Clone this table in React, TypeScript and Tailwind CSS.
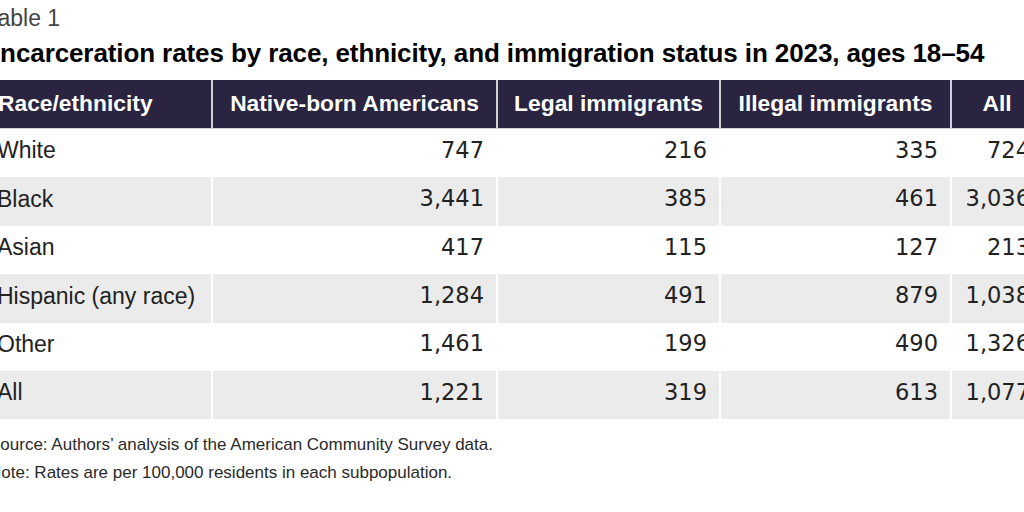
const headers = ['Race/ethnicity', 'Native-born Americans', 'Legal immigrants', 'Illegal immigrants', 'All'];

const rows: string[][] = [
  ['White', '747', '216', '335', '724'],
  ['Black', '3,441', '385', '461', '3,036'],
  ['Asian', '417', '115', '127', '213'],
  ['Hispanic (any race)', '1,284', '491', '879', '1,038'],
  ['Other', '1,461', '199', '490', '1,326'],
  ['All', '1,221', '319', '613', '1,077'],
];

const cols = 'grid grid-cols-[221px_283px_221px_229px_90px] gap-x-[2px]';

export default function App() {
  return (
    <div className="w-[1024px] h-[512px] overflow-hidden bg-white font-['Liberation_Sans',Arial,sans-serif]">
      <div className="w-[1052px] -ml-[10px]">
        {/* label + title */}
        <div className="pt-[5px] h-[34px] text-[23px] leading-[26px] text-[#444] -ml-[4px]">Table 1</div>
        <h1 className="mt-[4px] h-[36px] text-[26px] leading-[30px] font-bold text-black ml-[3px] tracking-[-0.1px]">
          Incarceration rates by race, ethnicity, and immigration status in 2023, ages 18–54
        </h1>

        {/* table */}
        <div className="mt-[6px]">
          <div className={`${cols} bg-[#cfcfd8] pb-[1px]`}>
            {headers.map((h, i) => (
              <div
                key={h}
                className={`h-[48px] bg-[#2a2440] text-white font-bold text-[22.8px] flex items-center pb-[2px] ${
                  i === 0 ? 'pl-[8px]' : 'justify-center'
                }`}
              >
                {h}
              </div>
            ))}
          </div>
          {rows.map((r, ri) => (
            <div key={r[0] + ri} className={cols}>
              {r.map((c, ci) => (
                <div
                  key={ci}
                  className={`h-[48.4px] flex items-center pb-[5px] text-[#222] ${
                    ri % 2 === 1 ? 'bg-[#ebebeb]' : 'bg-white'
                  } ${
                    ci === 0
                      ? 'pl-[7px] text-[23px]'
                      : "justify-end pr-[12px] text-[22.5px] font-['DejaVu_Sans',sans-serif]"
                  }`}
                >
                  {c}
                </div>
              ))}
            </div>
          ))}
        </div>

        {/* notes */}
        <div className="mt-[12px] text-[17px] leading-[28px] text-[#2a2a2a] -ml-[1px]">
          <p>Source: Authors’ analysis of the American Community Survey data.</p>
          <p>Note: Rates are per 100,000 residents in each subpopulation.</p>
        </div>
      </div>
    </div>
  );
}
